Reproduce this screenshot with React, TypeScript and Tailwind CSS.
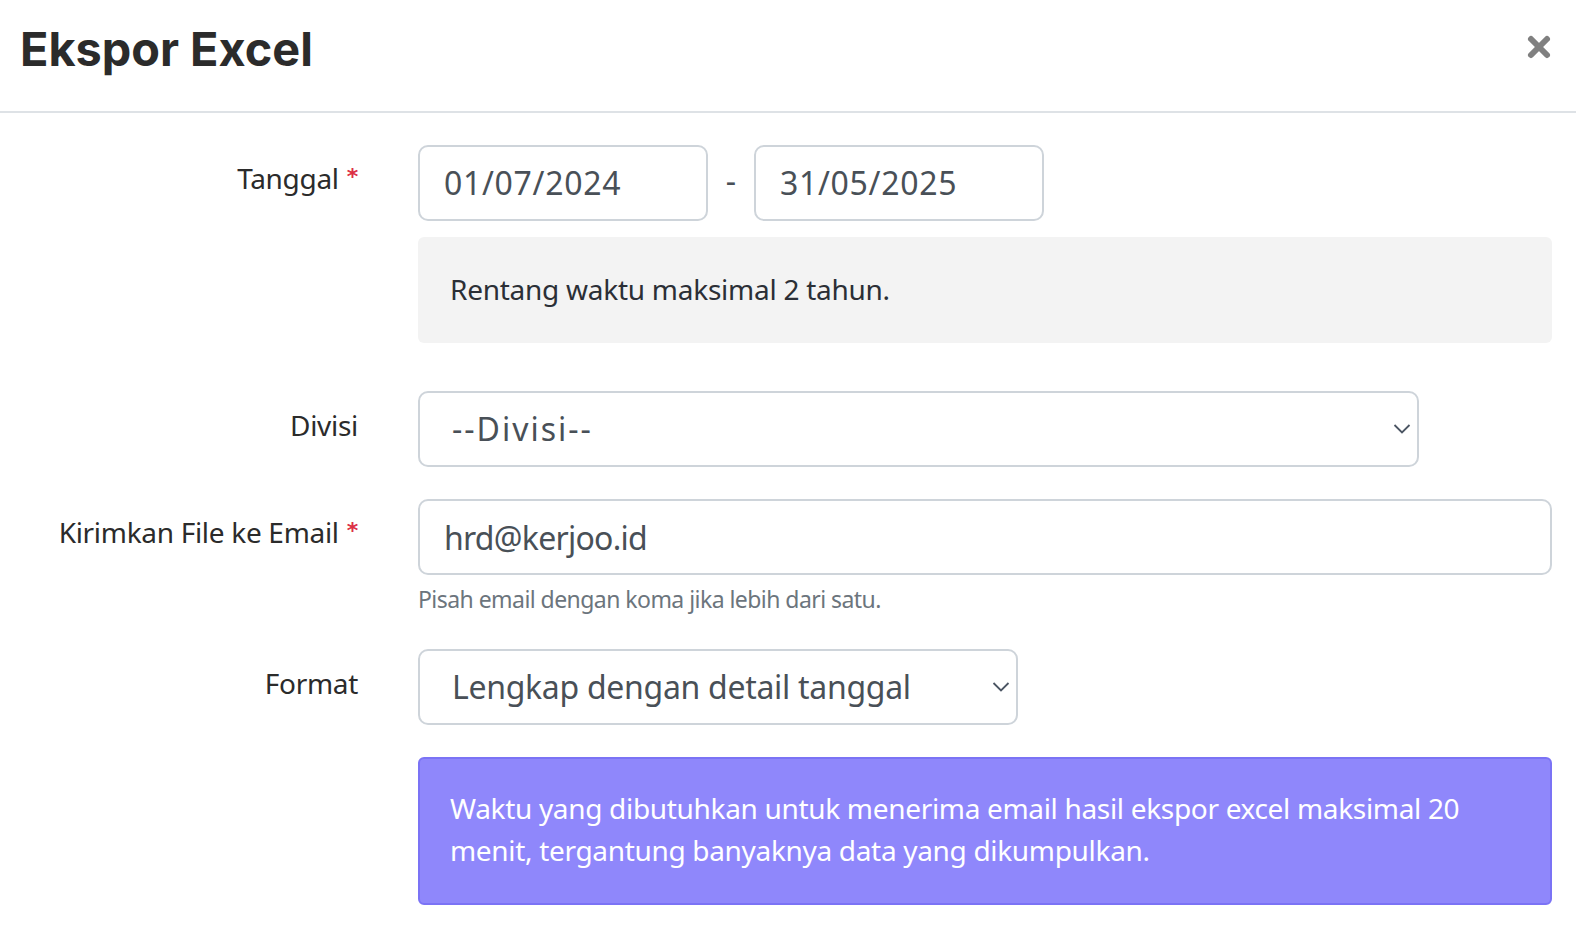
import { X } from 'lucide-react';

const body = "font-['Noto_Sans',sans-serif]";

function Chevron({ className }: { className?: string }) {
    return (
        <svg viewBox="0 0 18 12" fill="none" stroke="#4b5563" strokeWidth="1.8" className={className}>
            <path d="M1.5 2l7.5 7.5L16.5 2" />
        </svg>
    );
}

function Label({ text, required }: { text: string; required?: boolean }) {
    return (
        <label className="block text-right text-[28px] leading-[42px] tracking-[-0.3px] text-[#2b2b2b]">
            {text}
            {required && <span className="ml-2 text-[22px] leading-none align-[5px] font-bold text-[#dc2f45] font-['DejaVu_Sans',sans-serif]">*</span>}
        </label>
    );
}

export default function App() {
    return (
        <div className={`w-[1576px] h-[932px] overflow-hidden bg-white ${body}`}>
            {/* Header */}
            <div className="flex items-start justify-between h-[113px] border-b-2 border-[#dee2e6] pl-[20px] pr-[21px]">
                <h1 className="mt-[19px] text-[46.8px] leading-[60px] font-bold text-[#2b2b2b] font-['Inter',sans-serif]">Ekspor Excel</h1>
                <button className="mt-[31px] text-[#808080]">
                    <X size={32} strokeWidth={4.5} />
                </button>
            </div>

            {/* Form */}
            <div className="grid grid-cols-[358px_1fr] gap-x-[60px] pt-[32px] pr-[24px]">
                <div className="pt-[12px]"><Label text="Tanggal" required /></div>
                <div>
                    <div className="flex items-center">
                        <input defaultValue="01/07/2024" className="w-[290px] h-[76px] rounded-[10px] border-2 border-[#ced4da] px-[24px] pb-[2px] text-[32px] tracking-[0.7px] text-[#495057]" />
                        <span className="w-[46px] pb-[5px] text-center text-[32px] text-[#495057]">-</span>
                        <input defaultValue="31/05/2025" className="w-[290px] h-[76px] rounded-[10px] border-2 border-[#ced4da] px-[24px] pb-[2px] text-[32px] tracking-[0.7px] text-[#495057]" />
                    </div>
                    <div className="mt-[16px] h-[106px] rounded-[6px] bg-[#f3f3f3] px-[32px] pb-[2px] flex items-center text-[28px] tracking-[-0.26px] text-[#2b2f36]">
                        Rentang waktu maksimal 2 tahun.
                    </div>
                </div>

                <div className="pt-[61px]"><Label text="Divisi" /></div>
                <div className="pt-[48px]">
                    <div className="relative w-[1001px]">
                        <select className="w-full h-[76px] appearance-none rounded-[10px] border-2 border-[#ced4da] bg-white px-[32px] text-[32px] tracking-[2px] text-[#495057]">
                            <option>--Divisi--</option>
                        </select>
                        <Chevron className="absolute right-[8px] top-[32px] w-[18px] h-[12px]" />
                    </div>
                </div>

                <div className="pt-[44px]"><Label text="Kirimkan File ke Email" required /></div>
                <div className="pt-[32px]">
                    <input defaultValue="hrd@kerjoo.id" className="block w-full h-[76px] rounded-[10px] border-2 border-[#ced4da] px-[24px] text-[32px] tracking-[-0.75px] text-[#495057]" />
                    <p className="mt-[7px] text-[23px] leading-[34px] tracking-[-0.55px] text-[#6c757d]">Pisah email dengan koma jika lebih dari satu.</p>
                </div>

                <div className="pt-[46px]"><Label text="Format" /></div>
                <div className="pt-[33px]">
                    <div className="relative w-[600px]">
                        <select className="w-full h-[76px] appearance-none rounded-[10px] border-2 border-[#ced4da] bg-white px-[32px] text-[32px] tracking-[-0.3px] text-[#495057]">
                            <option>Lengkap dengan detail tanggal</option>
                        </select>
                        <Chevron className="absolute right-[8px] top-[32px] w-[18px] h-[12px]" />
                    </div>
                </div>

                <div />
                <div className="pt-[32px]">
                    <div className="h-[148px] rounded-[6px] border-2 border-[#7b73f5] bg-[#8f87fb] px-[30px] pt-[28px] text-[28px] leading-[42px] tracking-[-0.32px] text-white">
                        Waktu yang dibutuhkan untuk menerima email hasil ekspor excel maksimal 20 menit, tergantung banyaknya data yang dikumpulkan.
                    </div>
                </div>
            </div>
        </div>
    );
}
